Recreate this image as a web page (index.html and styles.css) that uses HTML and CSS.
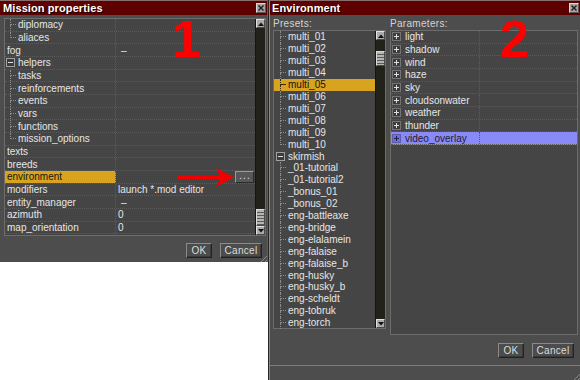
FILE: index.html
```html
<!DOCTYPE html>
<html>
<head>
<meta charset="utf-8">
<title>Mission properties / Environment</title>
<link rel="stylesheet" href="styles.css">
</head>
<body>
<div class="desk">
  <section class="win win-mp">
    <header class="titlebar">
      <span class="title">Mission properties</span>
      <svg class="closebtn" width="10" height="10" viewBox="0 0 10 10"><rect x="0.5" y="0.5" width="9" height="9" fill="#a4a4a4" stroke="#d8d8d8"/><path d="M9.5 0.5v9h-9" fill="none" stroke="#555"/><path d="M2.5 2.5l5 5M7.5 2.5l-5 5" stroke="#1c1c1c" stroke-width="1.4"/></svg>
    </header>
    <div class="mp-body">
      <div class="frame mp-frame">
        <div class="table">
          <div class="row"><div class="cname"><span class="tl"></span><span class="txt">diplomacy</span></div><div class="cval"></div></div>
          <div class="row"><div class="cname"><span class="tl last"></span><span class="txt">aliaces</span></div><div class="cval"></div></div>
          <div class="row"><div class="cname"><span class="txt lv0">fog</span></div><div class="cval"><span class="dash">–</span></div></div>
          <div class="row"><div class="cname"><svg class="box mbox" width="9" height="9" viewBox="0 0 9 9"><rect x="0.5" y="0.5" width="8" height="8" fill="#3c3c3c" stroke="#a0a0a0"/><path d="M2 4.5h5" stroke="#e0e0e0"/></svg><span class="txt">helpers</span></div><div class="cval"></div></div>
          <div class="row"><div class="cname"><span class="tl"></span><span class="txt">tasks</span></div><div class="cval"></div></div>
          <div class="row"><div class="cname"><span class="tl"></span><span class="txt">reinforcements</span></div><div class="cval"></div></div>
          <div class="row"><div class="cname"><span class="tl"></span><span class="txt">events</span></div><div class="cval"></div></div>
          <div class="row"><div class="cname"><span class="tl"></span><span class="txt">vars</span></div><div class="cval"></div></div>
          <div class="row"><div class="cname"><span class="tl"></span><span class="txt">functions</span></div><div class="cval"></div></div>
          <div class="row"><div class="cname"><span class="tl last"></span><span class="txt">mission_options</span></div><div class="cval"></div></div>
          <div class="row"><div class="cname"><span class="txt lv0">texts</span></div><div class="cval"></div></div>
          <div class="row"><div class="cname"><span class="txt lv0">breeds</span></div><div class="cval"></div></div>
          <div class="row"><div class="cname sel-gold"><span class="txt lv0">environment</span></div><div class="cval"><button class="dots">...</button></div></div>
          <div class="row"><div class="cname"><span class="txt lv0">modifiers</span></div><div class="cval">launch *.mod editor</div></div>
          <div class="row"><div class="cname"><span class="txt lv0">entity_manager</span></div><div class="cval"><span class="dash">–</span></div></div>
          <div class="row"><div class="cname"><span class="txt lv0">azimuth</span></div><div class="cval">0</div></div>
          <div class="row"><div class="cname"><span class="txt lv0">map_orientation</span></div><div class="cval">0</div></div>
        </div>
        <div class="sb">
          <div class="sb-btn"><svg width="6" height="4" viewBox="0 0 6 4"><path d="M0 4L3 0.5L6 4Z" fill="#111"/></svg></div>
          <div class="sb-space"></div>
          <div class="sb-thumb sb-thumb-mp"></div>
          <div class="sb-btn"><svg width="6" height="4" viewBox="0 0 6 4"><path d="M0 0L3 3.5L6 0Z" fill="#111"/></svg></div>
        </div>
      </div>
      <div class="btnrow">
        <button class="btn ok">OK</button>
        <button class="btn cancel">Cancel</button>
      </div>
    </div>
    <div class="grip"></div>
  </section>

  <div class="strip"></div>

  <section class="win win-env">
    <header class="titlebar">
      <span class="title">Environment</span>
      <svg class="closebtn" width="10" height="10" viewBox="0 0 10 10"><rect x="0.5" y="0.5" width="9" height="9" fill="#a4a4a4" stroke="#d8d8d8"/><path d="M9.5 0.5v9h-9" fill="none" stroke="#555"/><path d="M2.5 2.5l5 5M7.5 2.5l-5 5" stroke="#1c1c1c" stroke-width="1.4"/></svg>
    </header>
    <div class="env-body">
      <div class="env-grid">
        <div class="label">Presets:</div>
        <div class="label">Parameters:</div>

        <div class="frame pre-frame">
          <div class="plist">
            <div class="prow"><span class="tl ptl"></span><span class="txt">multi_01</span></div>
            <div class="prow"><span class="tl ptl"></span><span class="txt">multi_02</span></div>
            <div class="prow"><span class="tl ptl"></span><span class="txt">multi_03</span></div>
            <div class="prow"><span class="tl ptl"></span><span class="txt">multi_04</span></div>
            <div class="prow sel-gold"><span class="tl ptl"></span><span class="txt">multi_05</span></div>
            <div class="prow"><span class="tl ptl"></span><span class="txt">multi_06</span></div>
            <div class="prow"><span class="tl ptl"></span><span class="txt">multi_07</span></div>
            <div class="prow"><span class="tl ptl"></span><span class="txt">multi_08</span></div>
            <div class="prow"><span class="tl ptl"></span><span class="txt">multi_09</span></div>
            <div class="prow"><span class="tl ptl last"></span><span class="txt">multi_10</span></div>
            <div class="prow"><svg class="box pmbox" width="9" height="9" viewBox="0 0 9 9"><rect x="0.5" y="0.5" width="8" height="8" fill="#3c3c3c" stroke="#a0a0a0"/><path d="M2 4.5h5" stroke="#e0e0e0"/></svg><span class="txt">skirmish</span></div>
            <div class="prow"><span class="tl ptl"></span><span class="txt">_01-tutorial</span></div>
            <div class="prow"><span class="tl ptl"></span><span class="txt">_01-tutorial2</span></div>
            <div class="prow"><span class="tl ptl"></span><span class="txt">_bonus_01</span></div>
            <div class="prow"><span class="tl ptl"></span><span class="txt">_bonus_02</span></div>
            <div class="prow"><span class="tl ptl"></span><span class="txt">eng-battleaxe</span></div>
            <div class="prow"><span class="tl ptl"></span><span class="txt">eng-bridge</span></div>
            <div class="prow"><span class="tl ptl"></span><span class="txt">eng-elalamein</span></div>
            <div class="prow"><span class="tl ptl"></span><span class="txt">eng-falaise</span></div>
            <div class="prow"><span class="tl ptl"></span><span class="txt">eng-falaise_b</span></div>
            <div class="prow"><span class="tl ptl"></span><span class="txt">eng-husky</span></div>
            <div class="prow"><span class="tl ptl"></span><span class="txt">eng-husky_b</span></div>
            <div class="prow"><span class="tl ptl"></span><span class="txt">eng-scheldt</span></div>
            <div class="prow"><span class="tl ptl"></span><span class="txt">eng-tobruk</span></div>
            <div class="prow"><span class="tl ptl"></span><span class="txt">eng-torch</span></div>
          </div>
          <div class="sb">
            <div class="sb-btn"><svg width="6" height="4" viewBox="0 0 6 4"><path d="M0 4L3 0.5L6 4Z" fill="#111"/></svg></div>
            <div class="sb-thumb sb-thumb-pre"></div>
            <div class="sb-space"></div>
            <div class="sb-btn"><svg width="6" height="4" viewBox="0 0 6 4"><path d="M0 0L3 3.5L6 0Z" fill="#111"/></svg></div>
          </div>
        </div>

        <div class="frame par-frame">
          <div class="row prm"><div class="cname pname"><svg class="box pbox" width="9" height="9" viewBox="0 0 9 9"><rect x="0.5" y="0.5" width="8" height="8" fill="#3c3c3c" stroke="#a8a8a8" stroke-dasharray="1 1"/><path d="M2 4.5h5M4.5 2v5" stroke="#e0e0e0"/></svg><span class="txt">light</span></div><div class="cval"></div></div>
          <div class="row prm"><div class="cname pname"><svg class="box pbox" width="9" height="9" viewBox="0 0 9 9"><rect x="0.5" y="0.5" width="8" height="8" fill="#3c3c3c" stroke="#a8a8a8" stroke-dasharray="1 1"/><path d="M2 4.5h5M4.5 2v5" stroke="#e0e0e0"/></svg><span class="txt">shadow</span></div><div class="cval"></div></div>
          <div class="row prm"><div class="cname pname"><svg class="box pbox" width="9" height="9" viewBox="0 0 9 9"><rect x="0.5" y="0.5" width="8" height="8" fill="#3c3c3c" stroke="#a8a8a8" stroke-dasharray="1 1"/><path d="M2 4.5h5M4.5 2v5" stroke="#e0e0e0"/></svg><span class="txt">wind</span></div><div class="cval"></div></div>
          <div class="row prm"><div class="cname pname"><svg class="box pbox" width="9" height="9" viewBox="0 0 9 9"><rect x="0.5" y="0.5" width="8" height="8" fill="#3c3c3c" stroke="#a8a8a8" stroke-dasharray="1 1"/><path d="M2 4.5h5M4.5 2v5" stroke="#e0e0e0"/></svg><span class="txt">haze</span></div><div class="cval"></div></div>
          <div class="row prm"><div class="cname pname"><svg class="box pbox" width="9" height="9" viewBox="0 0 9 9"><rect x="0.5" y="0.5" width="8" height="8" fill="#3c3c3c" stroke="#a8a8a8" stroke-dasharray="1 1"/><path d="M2 4.5h5M4.5 2v5" stroke="#e0e0e0"/></svg><span class="txt">sky</span></div><div class="cval"></div></div>
          <div class="row prm"><div class="cname pname"><svg class="box pbox" width="9" height="9" viewBox="0 0 9 9"><rect x="0.5" y="0.5" width="8" height="8" fill="#3c3c3c" stroke="#a8a8a8" stroke-dasharray="1 1"/><path d="M2 4.5h5M4.5 2v5" stroke="#e0e0e0"/></svg><span class="txt">cloudsonwater</span></div><div class="cval"></div></div>
          <div class="row prm"><div class="cname pname"><svg class="box pbox" width="9" height="9" viewBox="0 0 9 9"><rect x="0.5" y="0.5" width="8" height="8" fill="#3c3c3c" stroke="#a8a8a8" stroke-dasharray="1 1"/><path d="M2 4.5h5M4.5 2v5" stroke="#e0e0e0"/></svg><span class="txt">weather</span></div><div class="cval"></div></div>
          <div class="row prm"><div class="cname pname"><svg class="box pbox" width="9" height="9" viewBox="0 0 9 9"><rect x="0.5" y="0.5" width="8" height="8" fill="#3c3c3c" stroke="#a8a8a8" stroke-dasharray="1 1"/><path d="M2 4.5h5M4.5 2v5" stroke="#e0e0e0"/></svg><span class="txt">thunder</span></div><div class="cval"></div></div>
          <div class="row prm sel-blue"><div class="cname pname"><svg class="box pbox" width="9" height="9" viewBox="0 0 9 9"><rect x="0.5" y="0.5" width="8" height="8" fill="#7070d8" stroke="#3a3a7a" stroke-dasharray="1 1"/><path d="M2 4.5h5M4.5 2v5" stroke="#20204a"/></svg><span class="txt">video_overlay</span></div><div class="cval"></div></div>
        </div>
      </div>
      <div class="btnrow env-btns">
        <button class="btn ok">OK</button>
        <button class="btn cancel">Cancel</button>
      </div>
      <div class="status"></div>
    </div>
    <div class="grip"></div>
  </section>
</div>

<div class="anno n1">1</div>
<div class="anno n2">2</div>
<svg class="arrow" width="60" height="24" viewBox="0 0 60 24"><rect x="1" y="9.5" width="44" height="3.6" fill="#f20000"/><path d="M40 2L58 11.3L40 21L45 11.3Z" fill="#f20000"/></svg>
</body>
</html>
```

FILE: styles.css
```css
* { box-sizing: border-box; }
html, body { margin: 0; padding: 0; }
body {
  width: 580px;
  height: 380px;
  overflow: hidden;
  background: #ffffff;
  position: relative;
  font-family: "Liberation Sans", Arial, sans-serif;
  font-size: 10px;
  color: #e6e6e6;
}

.desk { display: flex; align-items: flex-start; height: 380px; }

.win {
  background: #4d4d4d;
  display: flex;
  flex-direction: column;
  position: relative;
  flex: none;
}
.win-mp { width: 268px; height: 262px; border-right: 1px solid #5e5e5e; }
.strip { width: 1px; height: 380px; background: #2a2420; flex: none; }
.win-env { width: 311px; height: 380px; border-left: 1px solid #8a8a8a; }

.titlebar {
  height: 15px;
  flex: none;
  display: flex;
  align-items: center;
  justify-content: space-between;
  background: #5e0000;
  border-top: 1px solid #8a6e6e;
  padding: 0 1px 0 3px;
}
.win-env .titlebar { padding: 0 1px 0 2px; }
.title {
  font-weight: bold;
  font-size: 11px;
  line-height: 14px;
  color: #ffffff;
  letter-spacing: 0.1px;
  text-shadow: 1px 1px 0 #200000;
}
.closebtn { display: block; flex: none; }

/* ---------- mission properties ---------- */
.mp-body {
  flex: 1;
  display: flex;
  flex-direction: column;
  padding: 3px 1px 0 4px;
}
.frame {
  border: 1px solid #6c6c6c;
  background: #454545;
  display: flex;
  flex: none;
}
.mp-frame { height: 218px; }
.table { flex: 1; display: flex; flex-direction: column; min-width: 0; }

.row {
  display: flex;
  height: 12.66px;
  flex: none;
  border-bottom: 1px dotted #5b5b5b;
}
.cname {
  width: 111px;
  flex: none;
  display: flex;
  align-items: center;
  border-right: 1px dotted #5b5b5b;
  white-space: nowrap;
}
.pname { width: 89px; }
.cval {
  flex: 1;
  display: flex;
  align-items: center;
  padding-left: 2px;
  white-space: nowrap;
  min-width: 0;
}
.txt { white-space: nowrap; }
.lv0 { margin-left: 2px; }
.dash { padding-left: 3px; }

.tl {
  align-self: stretch;
  flex: none;
  width: 6px;
  margin-left: 5px;
  margin-right: 2px;
  display: flex;
  flex-direction: column;
}
.tl::before {
  content: "";
  flex: 1;
  border-left: 1px dotted #8c8c8c;
  border-bottom: 1px dotted #8c8c8c;
}
.tl::after {
  content: "";
  flex: 1;
  border-left: 1px dotted #8c8c8c;
}
.tl.last::after { border-left: none; }
.ptl { margin-left: 6px; }

.box { display: block; flex: none; }
.mbox { margin-left: 1px; margin-right: 3px; }
.pmbox { margin-left: 2px; margin-right: 3px; }
.pbox { margin-left: 1px; margin-right: 4px; }

.sel-gold { background: #d8a31e; color: #161616; }
.sel-gold .tl::before { border-left-color: #3a2a00; border-bottom: 1px solid #3a2a00; }
.sel-gold .tl::after { border-left-color: #3a2a00; }
.sel-blue { background: #8a8af6; color: #1c1c2c; }

.dots {
  margin-left: auto;
  margin-right: 1px;
  width: 19px;
  height: 12px;
  padding: 0 0 2px 1px;
  font: inherit;
  font-size: 10px;
  line-height: 8px;
  letter-spacing: 1px;
  color: #e0e0e0;
  background: #575757;
  border: 1px solid;
  border-color: #9a9a9a #2a2a2a #2a2a2a #9a9a9a;
}

/* scrollbar */
.sb {
  width: 10px;
  flex: none;
  display: flex;
  flex-direction: column;
  background: #22221a;
  border-left: 1px solid #151510;
}
.sb-btn {
  height: 9px;
  flex: none;
  display: flex;
  align-items: center;
  justify-content: center;
  background: #ababab;
  border: 1px solid;
  border-color: #e2e2e2 #4a4a4a #4a4a4a #e2e2e2;
}
.sb-space { flex: 1; }
.sb-thumb {
  flex: none;
  border: 1px solid;
  border-color: #dcdcdc #4a4a4a #4a4a4a #dcdcdc;
  background: repeating-linear-gradient(to bottom, #b4b4b4 0 2px, #5a5a5a 2px 3px);
}
.sb-thumb-mp { height: 17px; }
.sb-thumb-pre { height: 15px; margin-top: 11px; }

/* buttons */
.btnrow {
  display: flex;
  justify-content: flex-end;
  gap: 8px;
  padding-right: 4px;
  margin-top: 7px;
  flex: none;
}
.btn {
  height: 15px;
  padding: 0;
  font: inherit;
  font-size: 10px;
  color: #dcdcdc;
  background: #4c4c4c;
  border: 1px solid;
  border-color: #8a8a8a #222222 #222222 #8a8a8a;
  box-shadow: inset -1px -1px 0 #3a3a3a;
  letter-spacing: 0.3px;
}
.ok { width: 26px; }
.cancel { width: 42px; }

/* ---------- environment ---------- */
.env-body {
  flex: 1;
  display: flex;
  flex-direction: column;
  padding: 0 2px 0 3px;
}
.env-grid {
  display: grid;
  grid-template-columns: 113px 188px;
  column-gap: 4px;
  align-items: start;
}
.label {
  height: 15px;
  padding-top: 3px;
  line-height: 12px;
  color: #d4d4d4;
  letter-spacing: 0.3px;
}
.pre-frame { height: 299px; }
.par-frame { height: 305px; flex-direction: column; }
.plist { flex: 1; display: flex; flex-direction: column; min-width: 0; }
.prow {
  height: 11.92px;
  flex: none;
  display: flex;
  align-items: center;
  white-space: nowrap;
}
.prm { width: 100%; }
.env-btns { margin-top: 8px; }
.status {
  flex: 1;
  margin: 7px -2px 0 -3px;
  border-top: 1px solid #7e7e7e;
}

.grip {
  position: absolute;
  right: 0;
  bottom: 0;
  width: 9px;
  height: 9px;
  background: repeating-linear-gradient(135deg, transparent 0 2px, #8a8a8a 2px 3px);
  clip-path: polygon(100% 0, 100% 100%, 0 100%);
}

/* ---------- annotations ---------- */
.anno {
  position: absolute;
  font-family: "Liberation Sans", Arial, sans-serif;
  font-weight: bold;
  font-size: 52px;
  line-height: 52px;
  color: #ff0000;
}
.n1 { left: 172px; top: 13px; }
.n2 { left: 500px; top: 13px; }
.arrow { position: absolute; left: 176px; top: 166px; }
```
